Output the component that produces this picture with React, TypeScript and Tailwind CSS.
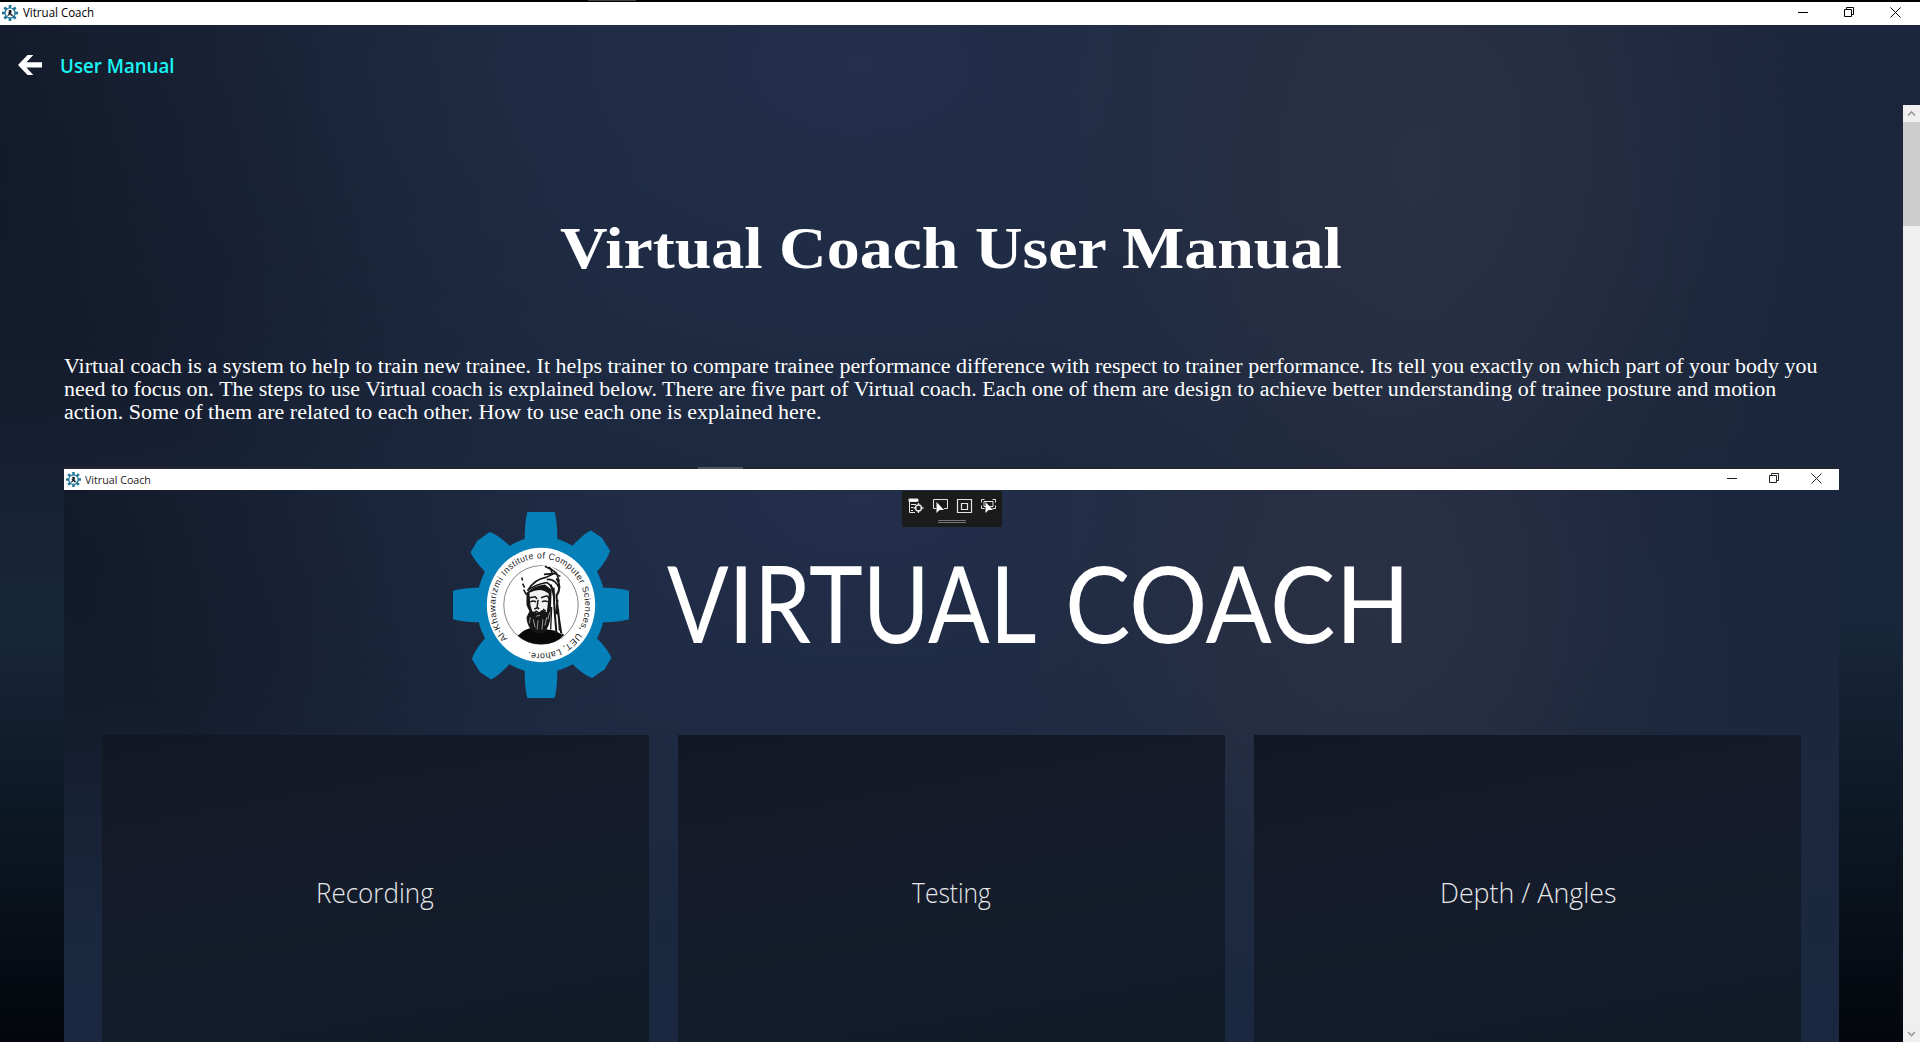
import { useLayoutEffect, useRef, useState } from "react";

function FitText({ width, className, children }: { width: number; className: string; children: string }) {
  const ref = useRef<HTMLSpanElement>(null);
  const [scale, setScale] = useState(1);
  useLayoutEffect(() => {
    if (ref.current) setScale(width / ref.current.offsetWidth);
  }, [width]);
  return (
    <span className="block" style={{ width }}>
      <span ref={ref} className={"inline-block origin-left whitespace-nowrap align-top " + className} style={{ transform: `scaleX(${scale})` }}>
        {children}
      </span>
    </span>
  );
}

function AppIcon({ className }: { className: string }) {
  return (
    <svg className={className} viewBox="0 0 16 16">
      <g fill="#1c7396">
        {[0, 45, 90, 135, 180, 225, 270, 315].map((a) => (
          <rect key={a} x="6.7" y="0" width="2.6" height="3.4" transform={`rotate(${a} 8 8)`} />
        ))}
      </g>
      <circle cx="8" cy="8" r="5" fill="#fff" stroke="#1c7396" strokeWidth="1.2" />
      <path d="M6.500 5h2.600l.6 1.800-.7 1.500 2.300 2.500H9L8 9.600l-1.500 1.200H5l1.900-2.300-1.200-.7 1.400-.8z" fill="#17242c" />
    </svg>
  );
}

function WindowButtons({ className, gap }: { className: string; gap: string }) {
  return (
    <div className={"ml-auto flex items-center " + gap + " " + className}>
      <svg className="size-[11px]" viewBox="0 0 11 11"><path d="M0 5.5h10" stroke="currentColor" /></svg>
      <svg className="size-[11px]" viewBox="0 0 11 11" fill="none" stroke="currentColor">
        <path d="M.5 2.5h7v7h-7zM2.5 2.5v-2h7v7h-2" />
      </svg>
      <svg className="size-[11px]" viewBox="0 0 11 11"><path d="M.5.5l10 10M10.5.5l-10 10" stroke="currentColor" /></svg>
    </div>
  );
}

function Tooth({ angle }: { angle: number }) {
  const diagonal = angle % 90 !== 0;
  return (
    <path
      d={diagonal
        ? "M-18 -57 C-18 -70 -18 -80 -15 -88 L-2 -91 13 -88 C17 -80 18 -70 18 -57z"
        : "M-17 -57 C-17 -71 -16.500 -83 -14 -91 H14 C16.500 -83 17 -71 17 -57z"}
      transform={`rotate(${angle})`}
    />
  );
}

function Logo() {
  return (
    <svg className="h-[186px] w-[176px] shrink-0" viewBox="-91 -91 182 182" preserveAspectRatio="none">
      <defs>
        <path id="ring" d="M-34.500 33 A46.500 46.500 0 1 1 -17 44.500" />
      </defs>
      <g fill="#0680b9">
        <circle r="66.500" />
        {[0, 45, 90, 135, 180, 225, 270, 315].map((a) => <Tooth key={a} angle={a} />)}
      </g>
      <circle r="56" fill="#fff" />
      <text fontSize="9" fontFamily="Liberation Sans" fill="#222">
        <textPath href="#ring" textLength="266" lengthAdjust="spacing">Al-Khawarizmi Institute of Computer Sciences, UET, Lahore.</textPath>
      </text>
      <circle r="38.500" fill="none" stroke="#333" strokeWidth=".6" />
      <g>
        <path d="M-24 30 Q-17 23 -8 22 L14 25 20 27 24 29 Q16 38 0 38.500 Q-15 38 -24 30z" fill="#090909" />
        <path d="M-17 -8 Q-20 -20 -17 -28 Q-10 -38 5 -39 Q15 -38 20 -29 L20 -15 Q18 -8 22 29 L14 25 12 -13 Q0 -22 -13 -12z" fill="#fff" />
        <path d="M-15 -12 Q-7 -19 4 -20 L11 -15 10 10 Q9 23 2 28 Q-14 28 -15 12 L-12 6 -15 0z" fill="#161616" />
        <path d="M-12 -12 Q0 -18 8 -11 L7 -1 6 7 1 5 -3 8 -9 6 -11 0z" fill="#f2f2f2" />
        <path d="M-12 -7l6-1 2 2M0 -7l6-2 3 3M-11 -3q3-2 6 0M1 -3q3-2 6 0M-3 -5l-1 7 2 2M-9 9l4-3 3 2 4-2 4 4M-7 4l3-1M2 4l3 2" fill="none" stroke="#161616" strokeWidth="1.500" />
        <path d="M-5 11l4-1M-11 12l-1 6M-8 14l2 8M-3 15l-1 9M2 14l-1 10M6 12l-2 8M9 7l-2 7" fill="none" stroke="#bbb" strokeWidth=".8" />
        <path d="M-14 -14 Q-7 -25 5 -27 L14 -31 20 -28M-14 -14 Q-6 -20 6 -22 Q12 -19 13 -9M4 -38l6 3 2 5M8 -37l8 6 3 8M3 -30l12-1M6 -25 Q15 -26 19 -16M-19 -21l2 4M-20 -27l1 3M-18 -15l3 5" fill="none" stroke="#171717" strokeWidth="1.600" />
        <path d="M16 -26 Q22 -18 16 -9 L18 10 21 28M13 -17l1 22 2 23M17 -5l-1 14M10 -20l4 10" fill="none" stroke="#171717" strokeWidth="2.100" />
        <path d="M11 2l-1 22M18 4l1 21" fill="none" stroke="#171717" strokeWidth="1.400" />
      </g>
    </svg>
  );
}

function DebugToolbar() {
  return (
    <div className="absolute left-[837.500px] top-[22px] flex h-[36px] w-[100px] flex-col items-center bg-[#1b1b1b] pt-[7px]">
      <svg className="h-4 w-[88px]" viewBox="0 0 88 16" fill="none" stroke="#e4e4e4">
        <path d="M1 1h9v2.500H1z" fill="#fff" />
        <path d="M1.500 4v10.500H7M3 6.500h5M3 9.500h2M3 12.500h2" />
        <circle cx="10.500" cy="10" r="3" strokeWidth="1.400" />
        <path d="M10.500 5v3M10.500 12v3M5.500 10h3M12.500 10h3" strokeWidth="1.300" />
        <path d="M28 10.500h-2.500v-9h14v9H36" />
        <path d="M28.500 4v11l3-3h4.500z" fill="#fff" stroke="none" />
        <path d="M49.500 1.500h14v13h-14zM53.500 5.500h6v6h-6z" strokeWidth="1.200" />
        <path d="M73.500 4.500v-3h3M84.500 1.500h3v3M87.500 7.500v3h-3M76.500 10.500h-3v-3M76 3.500h9v5h-9z" />
        <path d="M77.500 4v11l3-3H85z" fill="#fff" stroke="none" />
      </svg>
      <div className="mt-[6px] h-[3px] w-[28px] border-y border-[#777]" />
    </div>
  );
}

function Card({ label, width }: { label: string; width: number }) {
  return (
    <div className="flex h-full flex-1 justify-center bg-[linear-gradient(170deg,#121823_0%,#151b2a_40%,#131c2a_70%,#101a27_100%)] pt-[135px]">
      <FitText width={width} className="font-['Open_Sans'] text-[28px] font-light leading-[44px] text-[#e6e8ea]">{label}</FitText>
    </div>
  );
}

const sceneGradient =
  "bg-[radial-gradient(ellipse_420px_620px_at_1420px_140px,#2b3144_0%,#2b3144a8_35%,#2b314438_70%,#2b314400_100%),radial-gradient(ellipse_900px_560px_at_860px_40px,#232f4b_0%,#222f49a0_40%,#222f4900_100%),radial-gradient(ellipse_620px_500px_at_20px_130px,#121928_0%,#121928c8_40%,#131a2a50_75%,#131a2a00_100%),linear-gradient(180deg,#1b253d_0%,#1a263b_40%,#18273b_58%,#0c1622_80%,#03060c_100%)]";
const previewGradient =
  "bg-[radial-gradient(ellipse_380px_480px_at_1310px_120px,#2b3144_0%,#2b3144a8_35%,#2b314438_70%,#2b314400_100%),radial-gradient(ellipse_800px_440px_at_800px_30px,#232f4b_0%,#222f49a0_40%,#222f4900_100%),radial-gradient(ellipse_580px_380px_at_20px_90px,#121928_0%,#121928c8_40%,#131a2a50_75%,#131a2a00_100%),linear-gradient(180deg,#1b253e_0%,#1b273d_50%,#192840_100%)]";

export default function App() {
  return (
    <div className="flex h-[1042px] w-[1920px] flex-col overflow-hidden">
      <div className="h-[2px] shrink-0 bg-black pl-[588px]"><div className="h-px w-[48px] bg-[#444]" /></div>
      <header className="flex h-[23px] shrink-0 items-start bg-white pl-[2px] pr-[19px] text-black">
        <AppIcon className="mr-[5px] mt-[3px] size-4" />
        <FitText width={71} className="font-['Open_Sans'] text-[12px] leading-[22px]">Vitrual Coach</FitText>
        <WindowButtons className="pt-[5px]" gap="gap-[35px]" />
      </header>
      <div className={"flex min-h-0 flex-1 flex-col " + sceneGradient}>
        <div className="flex h-[80px] shrink-0 items-start pl-[18px] pt-[26px]">
          <svg className="mt-[4px] h-[20px] w-[24px]" viewBox="0 0 24 20" fill="#fff">
            <path d="M0 10 9.500 0h5.800L8.500 7.300H24v5.200H8.500l6.800 7.500H9.500z" />
          </svg>
          <div className="ml-[18px]">
            <FitText width={115} className="font-['Open_Sans'] text-[19.500px] font-semibold leading-[30px] text-[#19f5f5]">User Manual</FitText>
          </div>
        </div>
        <div className="flex min-h-0 flex-1">
          <main className="flex min-w-0 flex-1 flex-col pl-[64px] pr-[64px]">
            <h1 className="flex h-[250px] shrink-0 justify-center pr-[2px] pt-[109px] text-white">
              <FitText width={782} className="font-['Liberation_Serif'] text-[59px] font-bold leading-[68px]">Virtual Coach User Manual</FitText>
            </h1>
            <div className="h-[114px] shrink-0 font-['Liberation_Serif'] text-[20.500px] leading-[23px] text-white">
              <FitText width={1753} className="">Virtual coach is a system to help to train new trainee. It helps trainer to compare trainee performance difference with respect to trainer performance. Its tell you exactly on which part of your body you</FitText>
              <FitText width={1712} className="">need to focus on. The steps to use Virtual coach is explained below. There are five part of Virtual coach. Each one of them are design to achieve better understanding of trainee posture and motion</FitText>
              <FitText width={757} className="">action. Some of them are related to each other. How to use each one is explained here.</FitText>
            </div>
            <section className={"relative flex min-h-0 flex-1 flex-col " + previewGradient}>
              <div className="-mt-[2px] h-[2px] shrink-0 bg-[#252431] pl-[634px]"><div className="h-[2px] w-[45px] bg-[#55555c]" /></div>
              <div className="flex h-[21px] shrink-0 items-start bg-white pl-[2px] pr-[17px] text-[#222]">
                <AppIcon className="mr-[4px] mt-[3px] size-[15px]" />
                <FitText width={66} className="font-['Open_Sans'] text-[11px] leading-[21px]">Vitrual Coach</FitText>
                <WindowButtons className="pt-[4px]" gap="gap-[31px]" />
              </div>
              <div className="flex h-[245px] shrink-0 items-start pl-[389px] pt-[22px]">
                <Logo />
                <div className="ml-[38px] mt-[20px] flex gap-[29px] font-['Lato'] text-[107px] leading-[140px] text-white">
                  <FitText width={369} className="">VIRTUAL</FitText>
                  <FitText width={345} className="">COACH</FitText>
                </div>
              </div>
              <div className="flex min-h-0 flex-1 gap-[29.500px] px-[38px]">
                <Card label="Recording" width={118} />
                <Card label="Testing" width={79} />
                <Card label="Depth / Angles" width={176} />
              </div>
              <DebugToolbar />
            </section>
          </main>
          <div className="flex w-[17px] shrink-0 flex-col items-center bg-[#efefef] text-[#999]">
            <svg className="h-[17px] w-[17px] shrink-0" viewBox="0 0 17 17" fill="none" stroke="currentColor" strokeWidth="1.600"><path d="M5 10.500 8.500 7l3.500 3.500" /></svg>
            <div className="h-[104px] w-full shrink-0 bg-[#cdcdcd]" />
            <svg className="mt-auto h-[17px] w-[17px] shrink-0" viewBox="0 0 17 17" fill="none" stroke="currentColor" strokeWidth="1.600"><path d="M5 7l3.500 3.500L12 7" /></svg>
          </div>
        </div>
      </div>
    </div>
  );
}
